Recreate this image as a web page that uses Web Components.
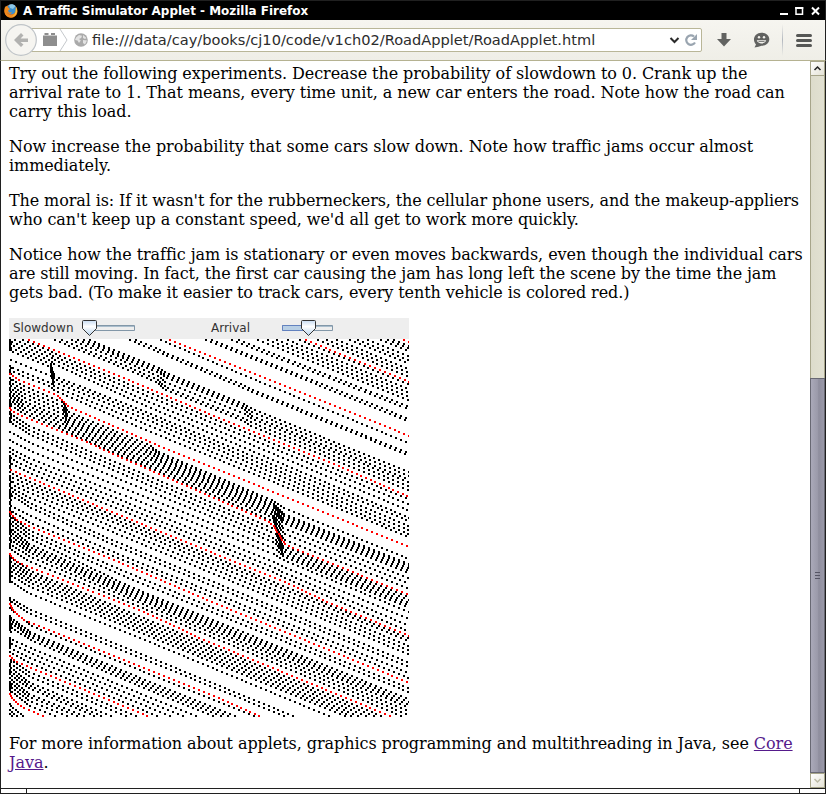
<!DOCTYPE html>
<html lang="en"><head><meta charset="utf-8"><title>A Traffic Simulator Applet</title>
<style>html,body{margin:0;height:100%;overflow:hidden;background:#fff}</style></head>
<body>
<browser-window>
  <title-bar slot="title">A Traffic Simulator Applet - Mozilla Firefox</title-bar>
  <nav-bar slot="nav">file:///data/cay/books/cj10/code/v1ch02/RoadApplet/RoadApplet.html</nav-bar>
  <page-document slot="page"></page-document>
  <scroll-bar slot="scroll"></scroll-bar>
</browser-window>
<script>
const define = (name, html, init) => customElements.define(name, class extends HTMLElement {
  constructor() {
    super();
    const t = document.createElement('template');
    t.innerHTML = html;
    this.attachShadow({mode: 'open'}).append(t.content.cloneNode(true));
    if (init) init(this.shadowRoot);
  }
});

define('browser-window', `<style>
:host{display:grid;grid-template-rows:20px 41px 727px 6px;width:826px;height:794px;box-sizing:border-box;background:#fff}
.body{display:grid;grid-template-columns:1fr 15px;border-left:1px solid #202020;border-right:1px solid #202020;min-height:0;overflow:hidden}
.foot{display:grid;grid-template-columns:25px 1fr 26px;box-sizing:border-box;border:1px solid #202020;background:#fff}
.foot i{display:block}.foot i+i{border-left:1px solid #202020}
</style><slot name="title"></slot><slot name="nav"></slot>
<div class="body"><slot name="page"></slot><slot name="scroll"></slot></div>
<div class="foot"><i></i><i></i><i></i></div>`);

define('title-bar', `<style>
:host{display:flex;align-items:center;box-sizing:border-box;height:20px;padding:0 4px 0 3px;background:#000;border:1px solid #202020;border-bottom:0;color:#fff;font:bold 11.96px/18px "DejaVu Sans",sans-serif;white-space:nowrap}
.t{flex:1;margin-left:5px}svg{display:block;flex:none}
</style><svg width="14" height="14" viewBox="0 0 14 14"><circle cx="7" cy="7" r="6.6" fill="#e66a12"/><circle cx="7.4" cy="5.5" r="5" fill="#3a8fd0"/><path d="M5 1c2-1.200 5-.8 6.500 1L9 5 6 4z" fill="#8cc8ea"/><path d="M.8 3.500C1.600 2 2.200 2 2.800 2.500c1 0 1.700.5 1.400 1.200L6 5 4.300 6.300C4 8.500 6 9 8 8.200 6.800 10.700 3.600 10 2.800 7.600 2.600 12 10 12 11.500 7.500L12 3c2.300 4 1.300 10-5 10.700C2 13.600-.8 9 .8 3.500z" fill="#f08a1d"/><path d="M12 3c2 4 .8 8.600-4 9.700 2.400-1.400 3.900-3.500 3.700-6z" fill="#f9cf45"/></svg>
<span class="t"><slot></slot></span>
<svg width="42" height="14" viewBox="0 0 42 14" fill="none" stroke="#fff" stroke-width="2"><path d="M1 10h8"/><path d="M17 3.750h6.500v6.500H17z" stroke-width="1.500"/><path d="M16.250 4h8"/><path d="m33 3.500 7 7m0-7-7 7"/></svg>`);

define('nav-bar', `<style>
:host{display:flex;align-items:center;box-sizing:border-box;height:41px;border:1px solid #202020;border-top:0;border-bottom:1px solid #b5b291;background:linear-gradient(#f6f5f0,#efeee7);color:#2c2c2c;font:14.600px/22px "DejaVu Sans",sans-serif;padding-left:4px;white-space:nowrap}
.back{flex:none;width:32px;height:32px;z-index:1}
.url{display:flex;align-items:center;box-sizing:border-box;width:680px;height:24px;margin-left:-15px;padding-left:20px;border:1px solid #b9b698;border-radius:2px;background:#fff}
.text{flex:1;margin-left:4px}svg{display:block;flex:none}
.sep{width:1px;height:32px;margin:0 13px 0 12px;background:linear-gradient(#efeee700,#b4b9bf 50%,#efeee700)}
.dl{margin-left:15px}.chat{margin-left:22px}
</style>
<svg class="back" viewBox="0 0 32 32"><circle cx="16" cy="16" r="15.300" fill="#f6f5f1" stroke="#bfc4c8" stroke-width="1.200"/><path d="M9 16l7-7 2.500 2.500-3 3H23v3.500h-7.500l3 2.500L16 23z" fill="#b2b2b0"/></svg>
<div class="url">
<svg width="26" height="22" viewBox="0 0 26 22"><path d="M0 6.500h14V17H0zM1.500 4h4v2h-4zm6.500 0h4v2H8z" fill="#8e8e8e"/><path d="M17 0l7 11-7 11" fill="none" stroke="#c5c9cc"/></svg>
<svg style="margin-left:5px" width="14" height="14" viewBox="0 0 14 14"><circle cx="7" cy="7" r="6.800" fill="#aaa"/><path d="M2 4.500 5 2l3 .7-.8 2.300L5 6l1.800 1.500L5 10 3.500 7.500 1 7zM9 2l3.500 3-1.500 1L9 5zM9 7l4 .5-2 4-2-1.500z" fill="#e3e3e3"/></svg>
<span class="text"><slot></slot></span>
<svg width="32" height="16" viewBox="0 0 32 16" fill="none"><path d="m1.500 6 4 4 4-4" stroke="#2a2a2a" stroke-width="2"/><path d="M26 10.500A4.700 4.700 0 1 1 25 4.500" stroke="#9aa5b0" stroke-width="2.200"/><path d="M28 2v6h-6z" fill="#9aa5b0"/></svg>
</div>
<svg class="dl" width="14" height="14" viewBox="0 0 14 14"><path d="M4.500 0h5v6H14l-7 7.500L0 6h4.500z" fill="#626361"/></svg>
<svg class="chat" width="17" height="16" viewBox="0 0 17 16"><path d="M8.500 .8C13 .8 16.300 3.500 16.300 7.300S13 13.800 8.500 13.800Q6 14.800 1.500 15.500L3 12.500C-1.500 7.500 2 .8 8.500 .8z" fill="#626361"/><path d="M3.800 8.300h9.400c-1 4.200-8.400 4.200-9.400 0z" fill="#f3f2ed"/><path d="M5.500 9.500h6" stroke="#626361" stroke-width=".8"/><circle cx="6" cy="5.300" r="1.200" fill="#f3f2ed"/><circle cx="11" cy="5.300" r="1.200" fill="#f3f2ed"/></svg>
<span class="sep"></span>
<svg width="16" height="13" viewBox="0 0 16 13"><path d="M1.500 1.500h13m-13 5h13m-13 5h13" stroke="#565755" stroke-width="3" stroke-linecap="round"/></svg>`);

define('scroll-bar', `<style>
:host{display:grid;grid-template-rows:15px 302px 395px 15px;width:15px;height:727px}
div{box-sizing:border-box;border:1px solid #a7a58a}svg{display:block}
.b{background:linear-gradient(135deg,#fff,#e4e2d5)}
.track{background:linear-gradient(90deg,#dddccb,#e2e1d2);border-width:0 1px}
.thumb{display:grid;place-items:center;border-color:#686873;background:linear-gradient(90deg,#aaa9b9,#9b9aaa 50%,#8f8e9e 60%,#9998a8)}
</style><div class="b"><svg width="13" height="13"><path d="m3.500 8 3-3 3 3" fill="none" stroke="#222" stroke-width="1.500"/></svg></div><div class="track"></div>
<div class="thumb"><svg width="5" height="7"><path d="M0 .5h5m-5 3h5m-5 3h5" stroke="#565565"/></svg></div>
<div class="b"><svg width="13" height="13"><path d="m3.500 5 3 3 3-3" fill="none" stroke="#bdbba5" stroke-width="1.500"/></svg></div>`);

define('page-document', `<style>
:host{display:block;padding:3px 0 0 8px;box-sizing:border-box;height:727px;overflow:hidden;color:#000;font:16px/19px "DejaVu Serif",serif;white-space:nowrap}
p{margin:0 0 16px}span{display:block;letter-spacing:var(--s,0)}a{color:#551a8b;text-decoration:underline}road-applet{margin-bottom:17px}
</style>
<p><span style="--s:-.077px">Try out the following experiments. Decrease the probability of slowdown to 0. Crank up the</span><span style="--s:-.062px">arrival rate to 1. That means, every time unit, a new car enters the road. Note how the road can</span><span>carry this load.</span></p>
<p><span style="--s:-.035px">Now increase the probability that some cars slow down. Note how traffic jams occur almost</span><span style="--s:-.08px">immediately.</span></p>
<p><span style="--s:-.11px">The moral is: If it wasn't for the rubberneckers, the cellular phone users, and the makeup-appliers</span><span style="--s:-.07px">who can't keep up a constant speed, we'd all get to work more quickly.</span></p>
<p><span style="--s:-.07px">Notice how the traffic jam is stationary or even moves backwards, even though the individual cars</span><span style="--s:-.13px">are still moving. In fact, the first car causing the jam has long left the scene by the time the jam</span><span style="--s:-.075px">gets bad. (To make it easier to track cars, every tenth vehicle is colored red.)</span></p>
<road-applet></road-applet>
<p><span style="--s:-.066px">For more information about applets, graphics programming and multithreading in Java, see <a>Core</a></span><span><a>Java</a>.</span></p>`);

define('applet-slider', `<style>
:host{display:block;width:54px;height:20px}svg{display:block;overflow:visible}
</style><svg width="54" height="20" viewBox="0 0 54 20"><defs><linearGradient id="g" x2="0" y2="1"><stop stop-color="#c7dbf2"/><stop offset=".4" stop-color="#fff"/><stop offset="1" stop-color="#b9d3ec"/></linearGradient></defs>
<path d="M1.500 7.500h50v5h-50z" fill="#eee" stroke="#8297a8"/><path d="M2 8.500h49" stroke="#a9bdcc"/><path class="fill" fill="#b8cfe5" stroke="#6382bf"/>
<path class="knob" d="M-7 3.500q0-1 1-1H6q1 0 1 1v7L0 17.500l-7-7z" fill="url(#g)" stroke="#333"/></svg>`);
const placeKnob = el => {
  const x = +el.getAttribute('at');
  el.shadowRoot.querySelector('.knob').setAttribute('transform', `translate(${x} 0)`);
  if (x > 10) el.shadowRoot.querySelector('.fill').setAttribute('d', `M1.500 7.500h${x - 2}v5h-${x - 2}z`);
};

/* Each track is a list of [x, c] knots: a car at x is drawn where y = 0.4x + c. */
const RED = [
  [[0,-157],[400,-157]],
  [[0,-119],[400,-117]],
  [[0,-63.5],[400,-63]],
  [[0,-7],[100,-7],[200,-5],[320,-5],[400,-2]],
  [[0,35],[10,37],[44,37],[50,38],[60,44],[150,47],[400,48]],
  [[0,70],[10,72],[74,72],[115,74],[200,77],[258,79],[264,81],[268,86],[272,91],[276,95],[281,95.500],[400,96]],
  [[0,130.500],[100,132],[280,133],[306,135],[320,136],[400,137]],
  [[0,173],[8,178],[16,179],[100,179],[200,182],[400,184]],
  [[0,215],[4,218.500],[12,220],[130,219],[165,221],[187,223],[400,225]],
  [[0,265],[3,269],[7,272],[15,275],[200,275],[300,279]],
  [[0,317],[7,320],[150,322]],
  [[0,355],[4,359],[12,363],[50,364]]
];
const BETWEEN = [
  {0:[-153,-150.600,-148,-143,-139,-135.500,-131,-127,-123],400:[-153,-150.600,-148,-143,-139,-135.500,-130,-126,-122]},
  {0:[-115,-110,-105.500,-102,-98,-90.500,-88,-80.400,-78],250:[-115,-110,-105.500,-102,-98,-90.500,-88,-80.400,-78],400:[-114,-109,-105.500,-101.500,-98,-92,-89.500,-80,-77.500]},
  {0:[-60,-50,-47.600,-32,-29.500,-27,-24,-20,-17],120:[-60,-50,-47.600,-31,-28.500,-26,-23,-19,-16],149:[-60,-50,-47,-31,-28.500,-26,-22,-18,-15],156:[-60,-49,-46.500,-29,-26.500,-24,-19,-14,-11],234:[-58,-48,-45,-29,-26.500,-24,-19,-14,-11],242:[-58,-47,-44.500,-27.500,-24,-20,-17,-13,-9],400:[-56,-46,-43.600,-27,-23,-19,-16,-12,-8]},
  {0:[-4,-1,2,5,8,11,20,27,31],41:[-4,-1,2,5,8,11,20,27,31],45:[-3,0,3,7,19,21.500,24.500,29,33],130:[-2,2,7,12,18,21,25,30,36],400:[1,6,12,19,22,27,31,35,38]},
  {0:[39,43,46,49,52,55,58,61,66],14:[41,45,49,53,57,60,63,66,69],54:[42,46,50,54,58,61,64,67,69.500],58:[49,52,55,57.500,60,62.500,65,67.500,70],140:[50,53,56,59,62,65,68,70.500,73],150:[53,55.500,58,60.500,63,65.500,68,70.500,73],264:[56,58.500,61,63.500,66,68.500,71,73.500,77],274:[59,65,67.500,70,72.500,75,80,85,91],400:[60,65,67.500,70,72.500,75,80,85,90]},
  {0:[74,78,82,92,101,109,113,119,124],20:[79,83,87,95,103,111,116,121,126],266:[84,88,93,97,103,109,117,123,128],274:[97.500,100,102.500,105,107.500,111,118,124,129],400:[98.500,101,103.500,106,108.500,113,120,127,133]},
  {0:[134,138,142,145,148,151,155,166,170],20:[135,138.500,142,146,151,156,160,168,175],100:[135,138.500,142,147,152,160,164,171,175],400:[140,143,148,152,156,164,168,174,179]},
  {0:[176,180,184,188,192,196,200,205,210],20:[183,187,191,197,200,203,206,210,215],120:[186,191,199,201.500,204,206.500,209,212,216],400:[189,193,200,203,206,209,213,217,221]},
  {0:[218,222,225,228,231,235,241,258,261],20:[224,226.500,229,232,235,239,246,262,266],150:[226,229,232,235,238,241,246.500,262,266],400:[229,232,235,238,240.500,243,250,264,268]},
  {0:[269,278,281,284,288,300,304,309,313],22:[278,285,287.500,290,293,301,306,311,316],150:[279,287,290,293,296,303,308,313,318]},
  {0:[320,324,327,331,335,339,343,347,351],20:[325,329,335,338,341,347,350,354,359],100:[326,330,336,340,343,347,350,354,359]}
];
/* Queues of waiting cars at the road entrance: [first y, last y]. */
const QUEUES = [[0,10],[26,34],[38,82],[116,128],[138,164],[168,206],[219,244],[258,264],[278,292],[301,309],[322,332],[344,354]];

define('road-applet', `<style>
:host{display:block;width:400px;height:399px}
.bar{display:flex;height:21px;background:#eee;color:#333;font:12px/21px "DejaVu Sans",sans-serif}
.a{width:70px;padding-left:4px}.b{width:70px;margin-left:74px}canvas{display:block}
</style><div class="bar"><span class="a">Slowdown</span><applet-slider at="6.500"></applet-slider><span class="b">Arrival</span><applet-slider at="27.500"></applet-slider></div>
<canvas width="400" height="378"></canvas>`, root => {
  root.querySelectorAll('applet-slider').forEach(placeKnob);
  const g = root.querySelector('canvas').getContext('2d');
  g.fillStyle = '#fff'; g.fillRect(0, 0, 400, 378);
  const at = (track, x) => {
    let i = 0;
    while (i < track.length - 2 && x > track[i + 1][0]) i++;
    const [x0, c0] = track[i], [x1, c1] = track[i + 1];
    return 0.4 * x + c0 + (c1 - c0) * Math.min(1, (x - x0) / (x1 - x0));
  };
  const drive = (track, color) => {
    g.fillStyle = color;
    for (let y = 1; y < 378; y += 2) {
      if (at(track, 0) > y + 1 || at(track, 401) < y) continue;
      let lo = 0, hi = 401;
      while (hi - lo > 0.05) { const m = (lo + hi) / 2; at(track, m) < y ? lo = m : hi = m; }
      g.fillRect(Math.round(lo - 0.5), y - 1, 2, 2);
    }
  };
  /* Small fixed irregularities in how closely each car follows the next. */
  const wobble = n => Math.sin(n * 12.9898) * 0.5;
  BETWEEN.forEach((table, t) => {
    const xs = Object.keys(table).map(Number);
    for (let k = 0; k < 9; k++) drive(xs.map(x => [x, table[x][k] + wobble(t * 9 + k)]), '#000');
  });
  [366, 371, 375].forEach(c => drive([[0, c], [15, c + 6], [60, c + 7]], '#000'));
  g.fillStyle = '#000';
  QUEUES.forEach(([a, b]) => {
    for (let y = a; y <= b; y += 2) g.fillRect(y % 6 === 4 ? 1 : 0, y - y % 2, 2, 2);
  });
  for (let y = 28; y < 46; y += 2) g.fillRect(41 + (y - 28) / 6 | 0, y, 2, 2);
  for (let y = 176; y < 212; y += 2) g.fillRect(263 + (y - 176) / 3.5 | 0, y, 2, 2);
  for (let y = 192; y < 210; y += 2) g.fillRect(268 + (y - 192) / 5 | 0, y, 2, 2);
  RED.forEach(t => drive(t, '#f00'));
});
</script>
</body></html>
